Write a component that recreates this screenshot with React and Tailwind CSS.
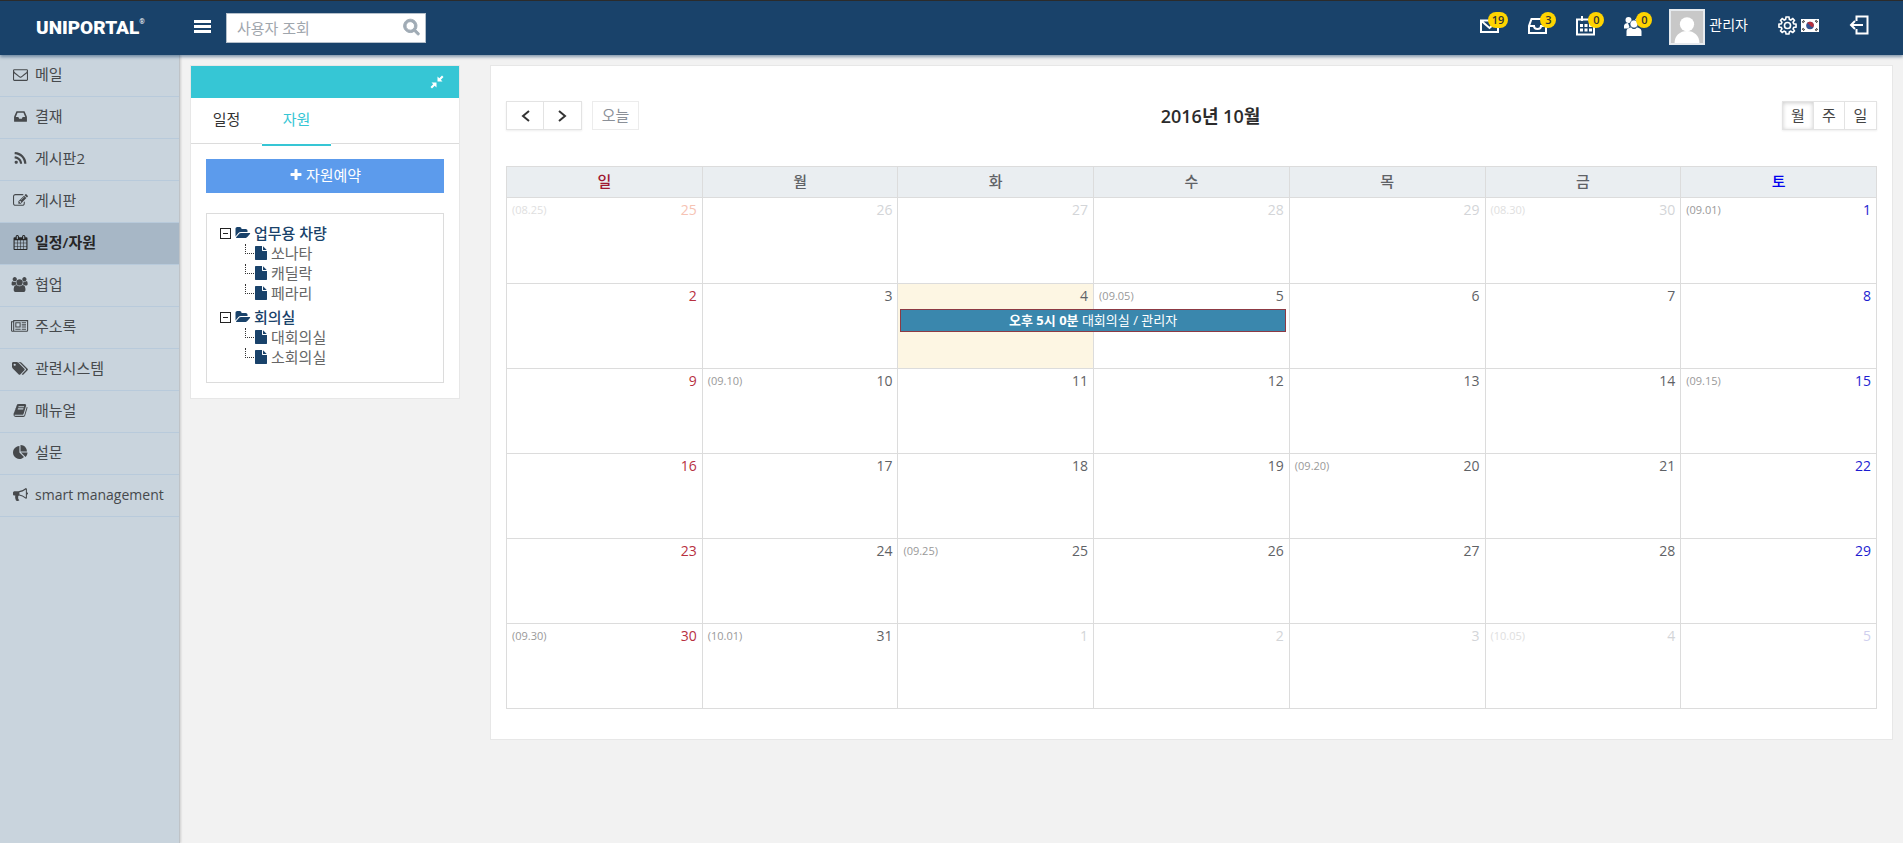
import { useState } from "react";

// 14px glyphs on a 1792 unit high grid
const glyphs = {
  mail: [1792, "M1664 1504v-768q-32 36-69 66-268 206-426 338-51 43-83 67t-86.5 48.5-102.5 24.5h-2q-48 0-102.5-24.5t-86.5-48.5-83-67q-158-132-426-338-37-30-69-66v768q0 13 9.5 22.5t22.5 9.5h1472q13 0 22.5-9.5t9.5-22.5zm0-1051v-24.5l-.5-13-3-12.5-5.5-9-9-7.5-14-2.5h-1472q-13 0-22.5 9.5t-9.5 22.5q0 168 147 284 193 152 401 317 6 5 35 29.5t46 37.5 44.5 31.5 50.5 27.5 43 9h2q20 0 43-9t50.5-27.5 44.5-31.5 46-37.5 35-29.5q208-165 401-317 54-43 100.5-115.5t46.5-131.5zm128-37v1088q0 66-47 113t-113 47h-1472q-66 0-113-47t-47-113v-1088q0-66 47-113t113-47h1472q66 0 113 47t47 113z"],
  inbox: [1792, "M1151 960h316q-1-3-2.5-8t-2.5-8l-212-496h-708l-212 496q-1 2-2.5 8t-2.5 8h316l95 192h320zm513 30v482q0 26-19 45t-45 19h-1408q-26 0-45-19t-19-45v-482q0-62 25-123l238-552q10-25 36.5-42t52.5-17h832q26 0 52.5 17t36.5 42l238 552q25 61 25 123z"],
  rss: [1792, "M576 1344q0 80-56 136t-136 56-136-56-56-136 56-136 136-56 136 56 56 136zm512 123q2 28-17 48-18 21-47 21h-135q-25 0-43-16.5t-20-41.5q-22-229-184.5-391.5t-391.5-184.5q-25-2-41.5-20t-16.5-43v-135q0-29 21-47 17-17 43-17h5q160 13 306 80.5t259 181.5q114 113 181.5 259t80.5 306zm512 2q2 27-18 47-18 20-46 20h-143q-26 0-44.5-17.5t-19.5-42.5q-12-215-101-408.5t-231.5-336-336-231.5-408.5-102q-25-1-42.5-19.5t-17.5-43.5v-143q0-28 20-46 18-18 44-18h3q262 13 501.5 120t425.5 294q187 186 294 425.5t120 501.5z"],
  edit: [1792, "M888 1184l116-116-152-152-116 116v56h96v96h56zm440-720q-16-16-33 1l-350 350q-17 17-1 33t33-1l350-350q17-17 1-33zm80 594v190q0 119-84.5 203.5t-203.5 84.5h-832q-119 0-203.5-84.5t-84.5-203.5v-832q0-119 84.5-203.5t203.5-84.5h832q63 0 117 25 15 7 18 23 3 17-9 29l-49 49q-14 14-32 8-23-6-45-6h-832q-66 0-113 47t-47 113v832q0 66 47 113t113 47h832q66 0 113-47t47-113v-126q0-13 9-22l64-64q15-15 35-7t20 29zm-96-738l288 288-672 672h-288v-288zm444 132l-92 92-288-288 92-92q28-28 68-28t68 28l152 152q28 28 28 68t-28 68z"],
  calendar: [1792, "M192 1664h288v-288h-288v288zm352 0h320v-288h-320v288zm-352-352h288v-320h-288v320zm352 0h320v-320h-320v320zm-352-384h288v-288h-288v288zm736 736h320v-288h-320v288zm-384-736h320v-288h-320v288zm768 736h288v-288h-288v288zm-384-352h320v-320h-320v320zm-352-864v-288q0-13-9.5-22.5t-22.5-9.5h-64q-13 0-22.5 9.5t-9.5 22.5v288q0 13 9.5 22.5t22.5 9.5h64q13 0 22.5-9.5t9.5-22.5zm736 864h288v-320h-288v320zm-384-384h320v-288h-320v288zm384 0h288v-288h-288v288zm32-480v-288q0-13-9.5-22.5t-22.5-9.5h-64q-13 0-22.5 9.5t-9.5 22.5v288q0 13 9.5 22.5t22.5 9.5h64q13 0 22.5-9.5t9.5-22.5zm384-64v1280q0 52-38 90t-90 38h-1408q-52 0-90-38t-38-90v-1280q0-52 38-90t90-38h128v-96q0-66 47-113t113-47h64q66 0 113 47t47 113v96h384v-96q0-66 47-113t113-47h64q66 0 113 47t47 113v96h128q52 0 90 38t38 90z"],
  users: [2048, "M657 896q-162 5-265 128h-134q-82 0-138-40.5t-56-118.5q0-353 124-353 6 0 43.5 21t97.5 42.5 119 21.5q67 0 133-23-5 37-5 66 0 159 90 287zm1071 637q0 120-73 189.5t-194 69.5h-874q-121 0-194-69.5t-73-189.5q0-53 3.5-103.5t14-109 26.5-108.5 43-97.5 62-81 85.5-53.5 111.5-20q10 0 43 21.5t73 48 107 48 135 21.5 135-21.5 107-48 73-48 43-21.5q61 0 111.5 20t85.5 53.5 62 81 43 97.5 26.5 108.5 14 109 3.5 103.5zm-1024-1277q0 106-75 181t-181 75-181-75-75-181 75-181 181-75 181 75 75 181zm704 384q0 159-112.5 271.5t-271.5 112.5-271.5-112.5-112.5-271.5 112.5-271.5 271.5-112.5 271.5 112.5 112.5 271.5zm576 225q0 78-56 118.5t-138 40.5h-134q-103-123-265-128 90-128 90-287 0-29-5-66 66 23 133 23 59 0 119-21.5t97.5-42.5 43.5-21q124 0 124 353zm-128-609q0 106-75 181t-181 75-181-75-75-181 75-181 181-75 181 75 75 181z"],
  newspaper: [2048, "M1024 512h-384v384h384v-384zm128 640v128h-640v-128h640zm0-768v640h-640v-640h640zm640 768v128h-512v-128h512zm0-256v128h-512v-128h512zm0-256v128h-512v-128h512zm0-256v128h-512v-128h512zm-1536 960v-960h-128v960q0 26 19 45t45 19 45-19 19-45zm1664 0v-1088h-1536v1088q0 33-11 64h1483q26 0 45-19t19-45zm128-1216v1216q0 80-56 136t-136 56h-1664q-80 0-136-56t-56-136v-1088h256v-128h1792z"],
  tags: [1920, "M448 448q0-53-37.5-90.5t-90.5-37.5-90.5 37.5-37.5 90.5 37.5 90.5 90.5 37.5 90.5-37.5 37.5-90.5zm1067 576q0 53-37 90l-491 492q-39 37-91 37-53 0-90-37l-715-716q-38-37-64.5-101t-26.5-117v-416q0-52 38-90t90-38h416q53 0 117 26.5t102 64.5l715 714q37 39 37 91zm384 0q0 53-37 90l-491 492q-39 37-91 37-36 0-59-14t-53-45l470-470q37-37 37-90 0-52-37-91l-715-714q-38-38-102-64.5t-117-26.5h224q53 0 117 26.5t102 64.5l715 714q37 39 37 91z"],
  book: [1792, "M1703 478q40 57 18 129l-275 906q-19 64-76.5 107.5t-122.5 43.5h-923q-77 0-148.5-53.5t-99.5-131.5q-24-67-2-127 0-4 3-27t4-37q1-8-3-21.5t-3-19.5q2-11 8-21t16.5-23.5 16.5-23.5q23-38 45-91.5t30-91.5q3-10 .5-30t-.5-28q3-11 17-28t17-23q21-36 42-92t25-90q1-9-2.5-32t.5-28q4-13 22-30.5t22-22.5q19-26 42.5-84.5t27.5-96.5q1-8-3-25.5t-2-26.5q2-8 9-18t18-23 17-21q8-12 16.5-30.5t15-35 16-36 19.5-32 26.5-23.5 36-11.5 47.5 5.5l-1 3q38-9 51-9h761q74 0 114 56t18 130l-274 906q-36 119-71.5 153.5t-128.5 34.5h-869q-27 0-38 15-11 16-1 43 24 70 144 70h923q29 0 56-15.5t35-41.5l300-987q7-22 5-57 38 15 59 43zm-1064 2q-4 13 2 22.5t20 9.5h608q13 0 25.5-9.5t16.5-22.5l21-64q4-13-2-22.5t-20-9.5h-608q-13 0-25.5 9.5t-16.5 22.5zm-83 256q-4 13 2 22.5t20 9.5h608q13 0 25.5-9.5t16.5-22.5l21-64q4-13-2-22.5t-20-9.5h-608q-13 0-25.5 9.5t-16.5 22.5z"],
  pie: [1792, "M768 890l546 546q-106 108-247.5 168t-298.5 60q-209 0-385.5-103t-279.5-279.5-103-385.5 103-385.5 279.5-279.5 385.5-103v762zm187 6h773q0 157-60 298.5t-168 247.5zm709-128h-768v-768q209 0 385.5 103t279.5 279.5 103 385.5z"],
  bullhorn: [1792, "M1664 640q53 0 90.5 37.5t37.5 90.5-37.5 90.5-90.5 37.5v384q0 52-38 90t-90 38q-417-347-812-380-58 19-91 66t-31 100.5 40 92.5q-20 33-23 65.5t6 58 33.5 55 48 50 61.5 50.5q-29 58-111.5 83t-168.5 11.5-132-55.5q-7-23-29.5-87.5t-32-94.5-23-89-15-101 3.5-98.5 22-110.5h-122q-66 0-113-47t-47-113v-192q0-66 47-113t113-47h480q435 0 896-384 52 0 90 38t38 90v384zm-128 604v-954q-394 302-768 343v270q377 42 768 341z"],
  search: [1792, "M1216 832q0-185-131.5-316.5t-316.5-131.5-316.5 131.5-131.5 316.5 131.5 316.5 316.5 131.5 316.5-131.5 131.5-316.5zm512 832q0 52-38 90t-90 38q-54 0-90-38l-343-342q-179 124-399 124-143 0-273.5-55.5t-225-150-150-225-55.5-273.5 55.5-273.5 150-225 225-150 273.5-55.5 273.5 55.5 225 150 150 225 55.5 273.5q0 220-124 399l343 343q37 37 37 90z"],
  folder: [1920, "M1943 952q0 31-31 66l-336 396q-43 51-120.5 86.5t-143.5 35.5h-1088q-34 0-60.5-13t-26.5-43q0-31 31-66l336-396q43-51 120.5-86.5t143.5-35.5h1088q34 0 60.5 13t26.5 43zm-343-344v160h-832q-94 0-197 47.5t-164 119.5l-337 396-5 6q0-4-.5-12.5t-.5-12.5v-960q0-92 66-158t158-66h320q92 0 158 66t66 158v32h544q92 0 158 66t66 158z"],
  file: [1792, "M1152 512v-472q22 14 36 28l408 408q14 14 28 36h-472zm-128 32q0 40 28 68t68 28h544v1056q0 40-28 68t-68 28h-1344q-40 0-68-28t-28-68v-1600q0-40 28-68t68-28h800v544z"],
  plus: [1792, "M1600 736v192q0 40-28 68t-68 28h-416v416q0 40-28 68t-68 28h-192q-40 0-68-28t-28-68v-416h-416q-40 0-68-28t-28-68v-192q0-40 28-68t68-28h416v-416q0-40 28-68t68-28h192q40 0 68 28t28 68v416h416q40 0 68 28t28 68z"],
};

function Glyph({ name, className = "h-3.5" }) {
  const [width, d] = glyphs[name];
  return (
    <svg viewBox={`0 0 ${width} 1792`} className={`${className} w-auto shrink-0 overflow-visible`} fill="currentColor" aria-hidden="true">
      <path d={d} />
    </svg>
  );
}

const menu = [
  { label: "메일", icon: "mail" },
  { label: "결재", icon: "inbox" },
  { label: "게시판2", icon: "rss" },
  { label: "게시판", icon: "edit" },
  { label: "일정/자원", icon: "calendar", active: true },
  { label: "협업", icon: "users" },
  { label: "주소록", icon: "newspaper" },
  { label: "관련시스템", icon: "tags" },
  { label: "매뉴얼", icon: "book" },
  { label: "설문", icon: "pie" },
  { label: "smart management", icon: "bullhorn", latin: true },
];

const resources = [
  { name: "업무용 차량", items: ["쏘나타", "캐딜락", "페라리"] },
  { name: "회의실", items: ["대회의실", "소회의실"] },
];

const weekdays = ["일", "월", "화", "수", "목", "금", "토"];

const lunar = {
  0: "08.25",
  5: "08.30",
  6: "09.01",
  10: "09.05",
  15: "09.10",
  20: "09.15",
  25: "09.20",
  30: "09.25",
  35: "09.30",
  36: "10.01",
  40: "10.05",
};

// the grid starts on Sunday, September 25
const weeks = Array.from({ length: 6 }, (_, w) =>
  Array.from({ length: 7 }, (_, d) => {
    const index = w * 7 + d;
    const date = new Date(2016, 8, 25 + index);
    return { index, day: date.getDate(), other: date.getMonth() !== 9, lunar: lunar[index] };
  })
);

function dayColor(weekday, other) {
  if (weekday === 0) return other ? "text-[#f6c3b4]" : "text-[#b8303f]";
  if (weekday === 6) return other ? "text-[#cfcfee]" : "text-[#1d1dd0]";
  return other ? "text-[#d3d5d8]" : "text-[#5f6266]";
}

const lineIcon = {
  fill: "none",
  stroke: "currentColor",
  strokeWidth: 2,
  "aria-hidden": true,
};

function Badge({ children }) {
  return (
    <span className="absolute -right-2 -top-1 h-4 min-w-4 rounded-full bg-[#ffd400] px-1 text-center text-[11px] font-semibold leading-4 text-[#333]">
      {children}
    </span>
  );
}

function Header() {
  return (
    <header className="relative z-10 flex h-[55px] items-center border-t border-[#2b2b2b] bg-[#19426a] text-white shadow-[0_2px_3px_rgba(25,66,106,0.5)]">
      <a href="#" className="flex w-[194px] shrink-0 items-start pl-9 font-['Roboto','Liberation_Sans',sans-serif] text-[19px] font-black leading-6">
        UNIPORTAL<span className="text-[7px] font-normal leading-3">®</span>
      </a>
      <button type="button" aria-label="메뉴" className="mb-1 flex w-[17px] flex-col gap-[2px]">
        <span className="h-[3px] w-full bg-white" />
        <span className="h-[3px] w-full bg-white" />
        <span className="h-[3px] w-full bg-white" />
      </button>
      <div className="relative ml-[15px]">
        <input
          type="text"
          aria-label="사용자 조회"
          placeholder="사용자 조회"
          className="h-[30px] w-[200px] border border-[#b5c0cb] bg-white pl-2.5 pr-8 text-[15px] text-[#555] placeholder:text-[#9fa6ad]"
        />
        <button type="button" aria-label="검색" className="absolute right-1.5 top-[5px] text-[#a0abb5]">
          <Glyph name="search" className="h-[17px] stroke-current stroke-[100]" />
        </button>
      </div>

      <div className="ml-auto flex items-center pr-[34px]">
        <div className="mb-1 flex items-center gap-7">
          <button type="button" aria-label="메일" className="relative h-5 w-5">
            <svg viewBox="0 0 20 20" className="h-5 w-5" {...lineIcon}>
              <path d="M1 4.500h17v11.500h-17zM1.500 5l8 7 8-7" />
            </svg>
            <Badge>19</Badge>
          </button>
          <button type="button" aria-label="결재" className="relative h-5 w-5">
            <svg viewBox="0 0 20 20" className="h-5 w-5" {...lineIcon}>
              <path d="M3.500 3h12l2.500 7v7h-17v-7zM1 10h5c0 4 7 4 7 0h5" />
            </svg>
            <Badge>3</Badge>
          </button>
          <button type="button" aria-label="일정" className="relative h-5 w-5">
            <svg viewBox="0 0 20 20" className="h-5 w-5" {...lineIcon}>
              <path d="M1 3.500h17v15h-17zM6 0v5M14 0v5" />
              <path d="M4 9.500h12M4 14h12" strokeWidth="3" strokeDasharray="3 1.500" />
            </svg>
            <Badge>0</Badge>
          </button>
          <button type="button" aria-label="협업" className="relative h-5 w-5">
            <svg viewBox="0 0 20 20" className="h-5 w-5" fill="currentColor" aria-hidden="true">
              <circle cx="4.500" cy="4" r="3" />
              <circle cx="14" cy="5" r="3" />
              <path d="M0 12.500V10c0-2 2-3 4-3l1.500 4-1.500 1.500z" />
              <circle cx="10" cy="8" r="4" stroke="#19426a" strokeWidth=".6" />
              <path d="M2.500 20v-4.500c0-3 3-4 4.500-4 2 2 4 2 6 0 1.500 0 4.500 1 4.500 4V20z" />
            </svg>
            <Badge>0</Badge>
          </button>
        </div>
        <button type="button" className="mb-0.5 ml-[25px] flex items-center gap-1 text-sm">
          <svg viewBox="0 0 36 36" className="h-9 w-9 border-2 border-[#e6eaee] bg-[#c8c8c8]" fill="#fff" aria-hidden="true">
            <circle cx="18" cy="15" r="8" />
            <path d="M4 36c0-8 6-13.500 14-13.500S32 28 32 36z" />
          </svg>
          <span className="mb-1">관리자</span>
        </button>
        <button type="button" aria-label="설정" className="mb-1.5 ml-[30px] flex items-center gap-1">
          <svg viewBox="0 0 20 20" className="h-[19px] w-[19px]" {...lineIcon}>
            <path d="M8.500 1h3l.5 2.500 1.500.7L15.600 2.800l1.700 1.700-1.400 2.200.6 1.500 2.500.5v2.900l-2.500.5-.6 1.400 1.400 2.200-1.700 1.700-2.200-1.400-1.400.6-.5 2.400h-3L8 16.600l-1.500-.6-2.100 1.400-1.700-1.700 1.400-2.200-.6-1.400L1 11.600V8.700l2.500-.5.6-1.500-1.400-2.200 1.700-1.700 2.100 1.400L8 3.500z" strokeWidth="1.700" />
            <circle cx="10" cy="10" r="3.200" strokeWidth="1.700" />
          </svg>
          <svg viewBox="0 0 18 13" className="h-[13px] w-[18px]" aria-hidden="true">
            <path fill="#fff" d="M0 0h18v13H0z" />
            <circle cx="9" cy="6.500" r="3.800" fill="#34538f" />
            <path fill="#b5303c" d="M5.900 4.300a3.800 3.800 0 0 1 6.800 3c-1.200 1.200-2.700.7-3.700-.8s-2.300-2-3.100-2.200z" />
            <path stroke="#222" strokeWidth="2" strokeDasharray="1 .5" d="M1.500 3.500l2-2M14.500 1.500l2 2M1.500 9.500l2 2M14.500 11.500l2-2" />
          </svg>
        </button>
        <button type="button" aria-label="로그아웃" className="mb-1.5 ml-[30px]">
          <svg viewBox="0 0 20 20" className="h-5 w-5" {...lineIcon}>
            <path d="M7.500 6V1.500h11v17h-11V14M14 10H2M6 6l-4 4 4 4" />
          </svg>
        </button>
      </div>
    </header>
  );
}

function Sidebar() {
  return (
    <nav className="w-[180px] shrink-0 border-r border-[#bfc3c7] bg-[#c9d4dd] shadow-[1px_0_2px_rgba(0,0,0,0.15)]">
      {menu.map((item) => (
        <a
          key={item.label}
          href="#"
          className={
            item.active
              ? "flex h-[42px] items-center gap-1.5 border-b border-[#b8cadb] bg-[#a7b7c6] pb-0.5 pl-[11px] text-[15px] font-semibold text-[#262626]"
              : "flex h-[42px] items-center gap-1.5 border-b border-[#b8cadb] pb-0.5 pl-[11px] text-[15px] text-[#46494c]"
          }
        >
          <span className="flex w-[18px] justify-center">
            <Glyph name={item.icon} className="h-[15px]" />
          </span>
          <span className={item.latin ? "text-sm" : undefined}>{item.label}</span>
        </a>
      ))}
    </nav>
  );
}

function ResourcePanel() {
  return (
    <section className="w-[270px] shrink-0 border border-[#e7e7e7] bg-white">
      <div className="flex h-8 items-center justify-end bg-[#36c6d5] pr-[15px]">
        <button type="button" aria-label="접기" className="text-white">
          <svg viewBox="0 0 14 14" className="h-3.5 w-3.5" fill="currentColor" aria-hidden="true">
            <path d="M7.500 6.500v-5L9.300 3.200 12 .5 13.500 2l-2.700 2.700 1.700 1.800zM6.500 7.500v5l-1.800-1.700L2 13.500.5 12l2.700-2.700-1.700-1.800z" />
          </svg>
        </button>
      </div>
      <div className="flex h-[46px] border-b border-[#dcdcdc] text-[15px]">
        <button type="button" className="w-[71px] pb-0.5 text-[#333]">
          일정
        </button>
        <button type="button" className="-mb-[3px] w-[69px] border-b-2 border-[#36c6d5] bg-white pb-[3px] text-[#36c6d5]">
          자원
        </button>
      </div>
      <div className="p-[15px]">
        <button type="button" className="flex h-[34px] w-full items-center justify-center gap-[3px] bg-[#5c9bec] pb-0.5 text-[15px] text-white">
          <Glyph name="plus" />
          자원예약
        </button>
        <div className="mt-5 border border-[#dcdcdc] px-[13px] pb-[11px] pt-[9px] text-[15px] leading-5">
          {resources.map((group) => (
            <div key={group.name} className="mb-1">
              <button type="button" className="flex items-center gap-1 font-medium text-[#19426a]">
                <span className="flex h-[11px] w-[11px] items-center justify-center border border-[#222]">
                  <span className="h-px w-[5px] bg-[#222]" />
                </span>
                <Glyph name="folder" />
                {group.name}
              </button>
              <ul className="pl-[25px]">
                {group.items.map((name) => (
                  <li key={name} className="flex h-5 items-center">
                    <span className="mb-2 h-2.5 w-[9px] border-b border-l border-dotted border-[#333]" />
                    <a href="#" className="flex items-center gap-[3px] text-[#666]">
                      <span className="text-[#19426a]">
                        <Glyph name="file" className="h-3.5" />
                      </span>
                      {name}
                    </a>
                  </li>
                ))}
              </ul>
            </div>
          ))}
        </div>
      </div>
    </section>
  );
}

function Calendar() {
  const [view, setView] = useState("월");

  return (
    <section className="min-w-0 flex-1 border border-[#e7e7e7] bg-white px-[15px] pb-[30px] pt-[35px]">
      <div className="flex items-center justify-between text-[15px]">
        <div className="flex gap-2.5">
          <div className="flex border border-[#e3e3e3] text-[#333] shadow-[0_1px_2px_rgba(0,0,0,0.07)]">
            <button type="button" aria-label="이전" className="flex h-[27px] w-[37px] items-center justify-center border-r border-[#e3e3e3]">
              <svg viewBox="0 0 12 12" className="h-3 w-3" {...lineIcon}>
                <path d="M10 1L4 6l6 5" />
              </svg>
            </button>
            <button type="button" aria-label="다음" className="flex h-[27px] w-[37px] items-center justify-center">
              <svg viewBox="0 0 12 12" className="h-3 w-3" {...lineIcon}>
                <path d="M2 1l6 5-6 5" />
              </svg>
            </button>
          </div>
          <button type="button" disabled className="w-[47px] border border-[#ececec] text-[#8b9098]">
            오늘
          </button>
        </div>
        <h2 className="text-lg font-semibold leading-6 text-[#2b2b2b]">2016년 10월</h2>
        <div className="flex border border-[#e3e3e3] text-[#444] shadow-[0_1px_2px_rgba(0,0,0,0.07)]">
          {["월", "주", "일"].map((name) => (
            <button
              key={name}
              type="button"
              onClick={() => setView(name)}
              className={
                view === name
                  ? "h-[27px] w-[31px] border-r border-[#e3e3e3] shadow-[inset_0_1px_4px_rgba(0,0,0,0.2)] last:border-r-0"
                  : "h-[27px] w-[31px] border-r border-[#e3e3e3] last:border-r-0"
              }
            >
              {name}
            </button>
          ))}
        </div>
      </div>

      <table className="mt-9 w-full table-fixed border-collapse text-sm">
        <thead>
          <tr className="h-[31px] bg-[#eaeef1] text-[15px]">
            {weekdays.map((name, i) => (
              <th
                key={name}
                className={
                  i === 0
                    ? "border border-[#dcdcdc] p-0 font-medium text-[#a01830]"
                    : i === 6
                      ? "border border-[#dcdcdc] p-0 font-medium text-[#0000ee]"
                      : "border border-[#dcdcdc] p-0 font-medium text-[#5f6266]"
                }
              >
                {name}
              </th>
            ))}
          </tr>
        </thead>
        <tbody>
          {weeks.map((week) => (
            <tr key={week[0].index} className="h-[85px] first:h-[86px]">
              {week.map((cell, i) => (
                <td
                  key={cell.index}
                  className={
                    cell.index === 9
                      ? "relative border border-[#dcdcdc] bg-[#fdf6e3] p-0 align-top"
                      : "border border-[#dcdcdc] p-0 align-top"
                  }
                >
                  <div className="flex items-center justify-between px-[5px] pt-0.5">
                    <span className={cell.other ? "text-[11px] text-[#e0e0e0]" : "text-[11px] text-[#999]"}>
                      {cell.lunar && `(${cell.lunar})`}
                    </span>
                    <span className={dayColor(i, cell.other)}>{cell.day}</span>
                  </div>
                  {cell.index === 9 && (
                    <a
                      href="#"
                      className="absolute left-0.5 top-[25px] z-10 h-[23px] w-[calc(200%-4px)] border border-[#8c3a44] bg-[#3a87ad] text-center text-[13px] leading-[21px] text-white"
                    >
                      <b>오후 5시 0분</b> 대회의실 / 관리자
                    </a>
                  )}
                </td>
              ))}
            </tr>
          ))}
        </tbody>
      </table>
    </section>
  );
}

export default function App() {
  return (
    <div className="flex min-h-screen flex-col bg-[#f2f2f2] font-['Open_Sans','Noto_Sans_CJK_KR',sans-serif]">
      <Header />
      <div className="flex flex-1">
        <Sidebar />
        <main className="flex min-w-0 flex-1 items-start gap-[30px] py-2.5 pl-2.5 pr-2.5">
          <ResourcePanel />
          <Calendar />
        </main>
      </div>
    </div>
  );
}
